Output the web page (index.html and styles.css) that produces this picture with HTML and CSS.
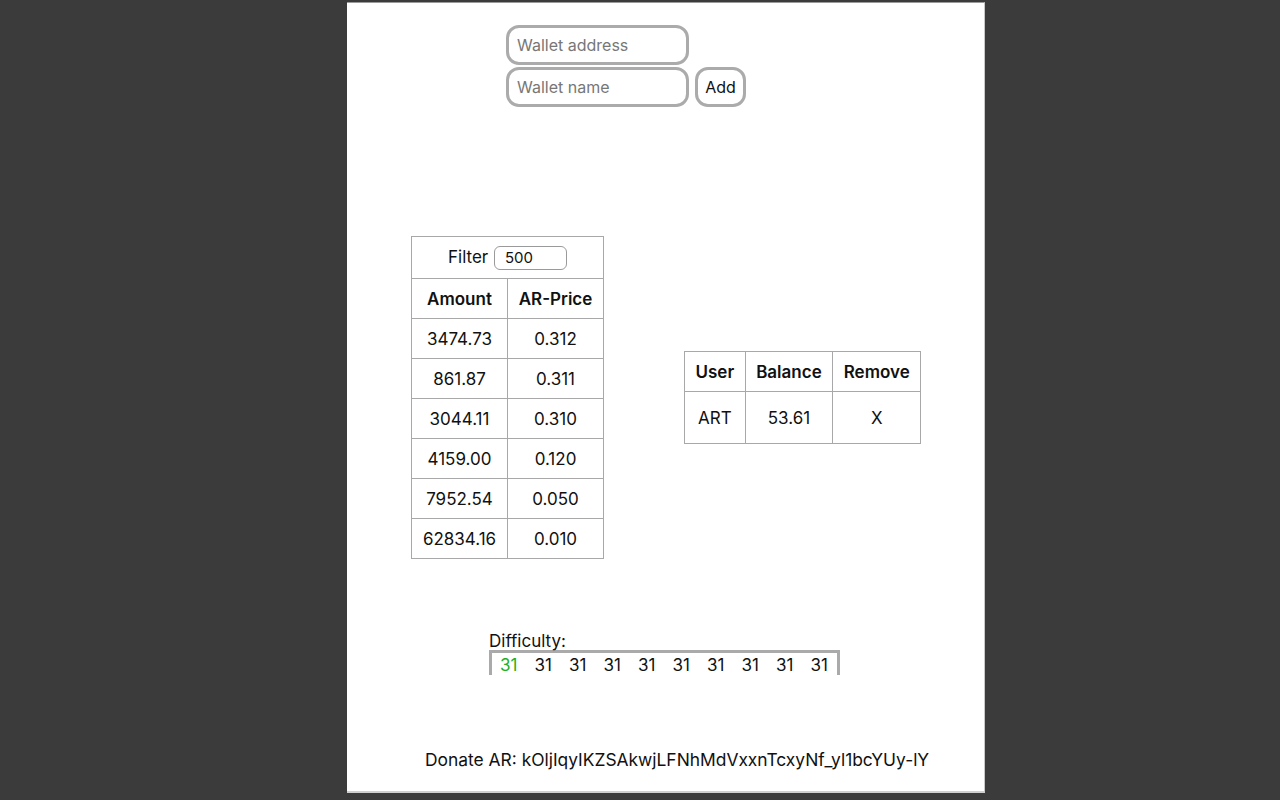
FILE: index.html
```html
<!DOCTYPE html>
<html>
<head>
<meta charset="utf-8">
<link rel="stylesheet" href="styles.css">
</head>
<body>
<div class="panel">
  <div class="form">
    <input class="field" type="text" placeholder="Wallet address">
    <div class="form-row">
      <input class="field" type="text" placeholder="Wallet name">
      <button class="add">Add</button>
    </div>
  </div>

  <div class="tables">
    <table class="grid orders">
      <tr><td colspan="2" class="filter-cell">Filter <input class="filter" type="text" value="500"></td></tr>
      <tr><th>Amount</th><th>AR-Price</th></tr>
      <tr><td>3474.73</td><td>0.312</td></tr>
      <tr><td>861.87</td><td>0.311</td></tr>
      <tr><td>3044.11</td><td>0.310</td></tr>
      <tr><td>4159.00</td><td>0.120</td></tr>
      <tr><td>7952.54</td><td>0.050</td></tr>
      <tr><td>62834.16</td><td>0.010</td></tr>
    </table>

    <table class="grid users">
      <tr><th>User</th><th>Balance</th><th>Remove</th></tr>
      <tr class="user-row"><td>ART</td><td>53.61</td><td>X</td></tr>
    </table>
  </div>

  <div class="difficulty">
    <div class="diff-label">Difficulty:</div>
    <div class="diff-box">
      <span class="ok">31</span><span>31</span><span>31</span><span>31</span><span>31</span><span>31</span><span>31</span><span>31</span><span>31</span><span>31</span>
    </div>
  </div>

  <div class="donate">Donate AR: kOljIqyIKZSAkwjLFNhMdVxxnTcxyNf_yl1bcYUy-lY</div>
</div>
</body>
</html>
```

FILE: styles.css
```css
html, body {
  margin: 0;
  padding: 0;
  background: #3b3b3b;
  height: 800px;
  overflow: hidden;
}

body {
  font-family: Inter, "Liberation Sans", Arial, sans-serif;
  color: #111;
}

.panel {
  box-sizing: border-box;
  width: 638px;
  height: 791px;
  margin: 2px 0 0 347px;
  background: #fff;
  border-top: 1px solid #9a9a9a;
  border-right: 1px solid #c8c8c8;
  border-bottom: 2px solid #cfcfcf;
  display: flex;
  flex-direction: column;
}

.form {
  margin: 22px 0 0 159px;
  display: flex;
  flex-direction: column;
  gap: 2px;
}

.form-row {
  display: flex;
  gap: 6px;
}

.field {
  box-sizing: border-box;
  width: 183px;
  height: 40px;
  border: 3px solid #ababab;
  border-radius: 13px;
  padding: 0 8px;
  font-family: inherit;
  font-size: 16px;
  color: #111;
  outline: none;
}

.field::placeholder {
  color: #777;
}

.add {
  box-sizing: border-box;
  width: 51px;
  height: 40px;
  border: 3px solid #ababab;
  border-radius: 13px;
  background: #fff;
  font-family: inherit;
  font-size: 16px;
  color: #111;
  padding: 0;
}

.tables {
  margin: 129px 0 0 64px;
  display: flex;
  align-items: center;
  gap: 80px;
}

.grid {
  border-collapse: collapse;
  font-size: 17px;
}

.grid td, .grid th {
  border: 1px solid #a8a8a8;
  text-align: center;
  padding: 0 8px;
  height: 40px;
  box-sizing: border-box;
}

.grid th {
  font-weight: 600;
}

.orders td, .orders th {
  width: 96px;
}

.orders .filter-cell {
  height: 42px;
}

.filter {
  box-sizing: border-box;
  width: 73px;
  height: 24px;
  border: 1px solid #9a9a9a;
  border-radius: 6px;
  padding: 0 10px;
  font-family: inherit;
  font-size: 15px;
  color: #111;
  vertical-align: middle;
  margin-left: 1px;
}

.users td, .users th {
  padding: 0 10.5px;
}

.users .user-row td {
  height: 52px;
}

.difficulty {
  margin: 73px 0 0 142px;
}

.diff-label {
  font-size: 17px;
  line-height: 18px;
}

.diff-box {
  box-sizing: border-box;
  width: 351px;
  height: 25px;
  border: 3px solid #aaaaaa;
  border-bottom: none;
  display: flex;
  gap: 15.5px;
  padding: 2px 0 0 8px;
  font-size: 17px;
  line-height: 20px;
}

.diff-box span {
  width: 19px;
}

.diff-box .ok {
  color: #22b022;
}

.donate {
  margin: 74px 0 0 78px;
  font-size: 17.4px;
}
```
